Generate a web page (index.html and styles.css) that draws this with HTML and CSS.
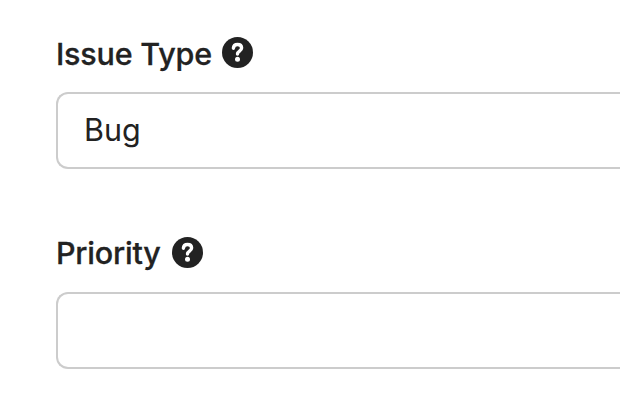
FILE: index.html
```html
<!DOCTYPE html>
<html lang="en">
<head>
<meta charset="UTF-8">
<meta name="viewport" content="width=device-width, initial-scale=1.0">
<title>Issue Form</title>
<link rel="stylesheet" href="styles.css">
</head>
<body>

<form class="issue-form">
    <div class="field">
        <div class="field-label">
            <label for="issueType">Issue Type</label>
            <svg class="help-icon" viewBox="0 0 31 31">
                <circle class="disc" cx="15.5" cy="15.5" r="15.5"/>
                <path class="hook" d="M11.4 11.2C11.6 8.8 13.2 7.5 15.5 7.5C18 7.5 19.6 8.9 19.6 11.1C19.6 14.2 15.5 14 15.5 17"/>
                <circle class="dot" cx="15.5" cy="22.2" r="2.5"/>
            </svg>
        </div>
        <input type="text" id="issueType" value="Bug">
    </div>
    <div class="field">
        <div class="field-label">
            <label for="priority">Priority</label>
            <svg class="help-icon" viewBox="0 0 31 31">
                <circle class="disc" cx="15.5" cy="15.5" r="15.5"/>
                <path class="hook" d="M11.4 11.2C11.6 8.8 13.2 7.5 15.5 7.5C18 7.5 19.6 8.9 19.6 11.1C19.6 14.2 15.5 14 15.5 17"/>
                <circle class="dot" cx="15.5" cy="22.2" r="2.5"/>
            </svg>
        </div>
        <input type="text" id="priority">
    </div>
</form>

</body>
</html>
```
FILE: styles.css
```css
body {
    margin: 0;
    background-color: #fff;
    color: #222;
    font-family: Inter, sans-serif;
}
.issue-form {
    padding: 34px 0 0 56px;
}
.field + .field {
    margin-top: 65px;
}
.field-label {
    display: flex;
    align-items: center;
    gap: 10px;
    height: 38px;
    margin-bottom: 20px;
    font-size: 30.5px;
    font-weight: 500;
    letter-spacing: -0.2px;
    -webkit-text-stroke: 0.3px #222;
}
.field-label label {
    padding-top: 1px;
}
.field + .field .field-label {
    gap: 11px;
}
.field + .field label {
    padding-top: 0;
    padding-bottom: 1px;
}
.help-icon {
    width: 31px;
    height: 31px;
    margin-bottom: 2px;
}
.disc {
    fill: #222;
}
.hook {
    fill: none;
    stroke: #fff;
    stroke-width: 3.4;
    stroke-linecap: round;
}
.dot {
    fill: #fff;
}
/* fields run off the right edge */
.field input {
    display: block;
    box-sizing: border-box;
    width: 100%;
    height: 77px;
    padding: 0 26px 2px;
    border: 2px solid #ccc;
    border-right: none;
    border-radius: 12px 0 0 12px;
    color: #222;
    font-family: inherit;
    font-size: 30.5px;
}
```
